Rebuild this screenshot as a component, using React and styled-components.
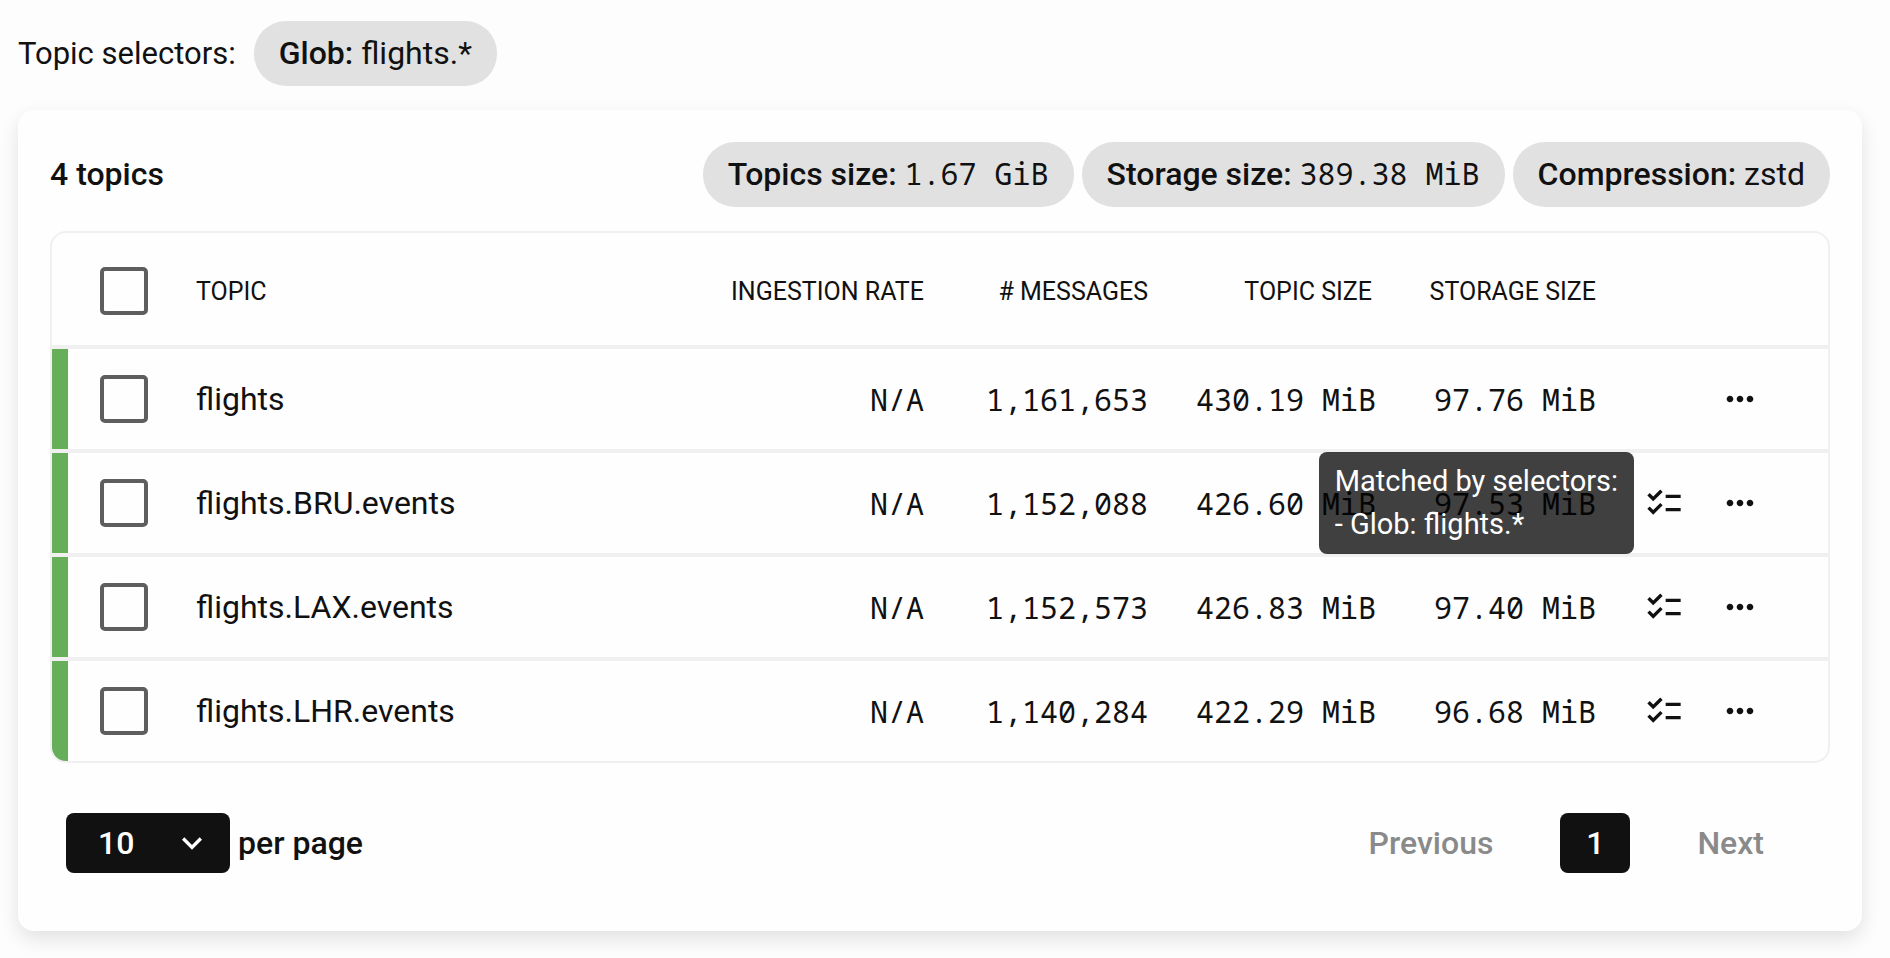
import React, {useState} from 'react';
import styled, { createGlobalStyle } from 'styled-components';
import { MdChecklist, MdExpandMore, MdMoreHoriz } from 'react-icons/md';

const topics = [
  { name: 'flights', rate: 'N/A', messages: '1,161,653', size: '430.19 MiB', storage: '97.76 MiB', matched: false },
  { name: 'flights.BRU.events', rate: 'N/A', messages: '1,152,088', size: '426.60 MiB', storage: '97.53 MiB', matched: true },
  { name: 'flights.LAX.events', rate: 'N/A', messages: '1,152,573', size: '426.83 MiB', storage: '97.40 MiB', matched: true },
  { name: 'flights.LHR.events', rate: 'N/A', messages: '1,140,284', size: '422.29 MiB', storage: '96.68 MiB', matched: true },
];

const TopicRow = ({ topic, checked, onToggle, showTooltip, onHover }) => (
  <tr>
    <SelectCell>
      <CheckBox type="checkbox" aria-label={`Select ${topic.name}`} checked={checked} onChange={onToggle} />
    </SelectCell>
    <Cell>{topic.name}</Cell>
    <NumCell>{topic.rate}</NumCell>
    <NumCell>{topic.messages}</NumCell>
    <NumCell>{topic.size}</NumCell>
    <NumCell>{topic.storage}</NumCell>
    <Cell>
      <Actions>
        {topic.matched &&
          <Matched onMouseEnter={() => onHover(topic.name)}>
            <MdChecklist size={40} />
            {showTooltip &&
              <Tooltip role="tooltip">
                Matched by selectors:<br />
                - Glob: flights.*
              </Tooltip>}
          </Matched>}
        <MenuBtn type="button" aria-label={`Actions for ${topic.name}`}><MdMoreHoriz size={40} /></MenuBtn>
      </Actions>
    </Cell>
  </tr>
);

export default function App() {
  const [selected, setSelected] = useState([]);
  const [hovered, setHovered] = useState('flights.BRU.events');
  const [perPage, setPerPage] = useState('10');

  const allSelected = selected.length === topics.length;

  const toggle = (name) => {
    setSelected(selected.includes(name) ? selected.filter(n => n !== name) : [...selected, name]);
  };

  return (
    <>
      <GlobalStyle />
      <Page>
        <Selectors>
          <SelectorsLabel>Topic selectors:</SelectorsLabel>
          <Chip><Strong>Glob:</Strong> flights.*</Chip>
        </Selectors>

        <Card>
          <CardHeader>
            <Title>{topics.length} topics</Title>
            <Chips>
              <Chip><Strong>Topics size:</Strong> <Mono>1.67 GiB</Mono></Chip>
              <Chip><Strong>Storage size:</Strong> <Mono>389.38 MiB</Mono></Chip>
              <Chip><Strong>Compression:</Strong> zstd</Chip>
            </Chips>
          </CardHeader>

          <TableWrap>
            <Table>
              <colgroup>
                <Col $width="120px" />
                <Col />
                <Col $width="264px" />
                <Col $width="224px" />
                <Col $width="224px" />
                <Col $width="224px" />
                <Col $width="208px" />
              </colgroup>
              <thead>
                <tr>
                  <HeadCell $select>
                    <CheckBox
                      type="checkbox"
                      aria-label="Select all topics"
                      checked={allSelected}
                      onChange={() => setSelected(allSelected ? [] : topics.map(t => t.name))}
                    />
                  </HeadCell>
                  <HeadCell>Topic</HeadCell>
                  <HeadCell $right>Ingestion rate</HeadCell>
                  <HeadCell $right># Messages</HeadCell>
                  <HeadCell $right>Topic size</HeadCell>
                  <HeadCell $right>Storage size</HeadCell>
                  <HeadCell aria-label="Actions" />
                </tr>
              </thead>
              <tbody>
                {topics.map(topic => (
                  <TopicRow
                    key={topic.name}
                    topic={topic}
                    checked={selected.includes(topic.name)}
                    onToggle={() => toggle(topic.name)}
                    showTooltip={hovered === topic.name}
                    onHover={setHovered}
                  />
                ))}
              </tbody>
            </Table>
          </TableWrap>

          <Footer>
            <PerPage>
              <SelectWrap>
                <Select id="per-page" value={perPage} onChange={(e) => setPerPage(e.target.value)}>
                  <option>10</option>
                  <option>25</option>
                  <option>50</option>
                </Select>
                <SelectArrow size={40} />
              </SelectWrap>
              <label htmlFor="per-page">per page</label>
            </PerPage>
            <Pager aria-label="Pages">
              <PageBtn type="button" disabled>Previous</PageBtn>
              <PageBtn type="button" $active aria-current="page">1</PageBtn>
              <PageBtn type="button" disabled>Next</PageBtn>
            </Pager>
          </Footer>
        </Card>
      </Page>
    </>
  );
}

const GlobalStyle = createGlobalStyle`
  * {
    box-sizing: border-box;
  }
  body {
    margin: 0;
    background-color: #fdfdfd;
    color: #111111;
    font-family: Roboto, sans-serif;
    font-size: 32px;
    line-height: 41px;
  }
`

const Page = styled.main`
  padding: 21px 28px 27px 18px;
`

const Selectors = styled.div`
  display: flex;
  align-items: center;
  gap: 18px;
  margin-bottom: 24px;
`

const SelectorsLabel = styled.span`
  font-size: 31px;
`

const Chip = styled.span`
  display: inline-block;
  padding: 12px 25px;
  border-radius: 32px;
  background-color: #e1e1e1;
  white-space: nowrap;
`

const Strong = styled.strong`
  font-weight: 500;
`

const Mono = styled.span`
  font-family: "Noto Sans Mono", "DejaVu Sans Mono", monospace;
  font-size: 30px;
  line-height: 1;
`

const Card = styled.section`
  padding: 32px 32px 58px;
  border-radius: 16px;
  background-color: #fefefe;
  box-shadow: 0 8px 20px rgba(0, 0, 0, .11);
`

const CardHeader = styled.header`
  display: flex;
  justify-content: space-between;
  align-items: center;
  margin-bottom: 24px;
`

const Title = styled.h2`
  margin: 0;
  font-size: 32px;
  font-weight: 500;
`

const Chips = styled.div`
  display: flex;
  gap: 8px;
`

const TableWrap = styled.div`
  border: 2px solid #f0f0f0;
  border-radius: 16px;
  overflow: hidden;
`

const Table = styled.table`
  width: 100%;
  table-layout: fixed;
  border-collapse: separate;
  border-spacing: 0;
`

const Col = styled.col`
  width: ${props => props.$width || 'auto'};
`

const HeadCell = styled.th`
  height: 112px;
  padding: 4px 24px 0;
  padding-left: ${props => props.$select ? '48px' : '24px'};
  font-size: 25px;
  font-weight: 400;
  text-align: ${props => props.$right ? 'right' : 'left'};
  text-transform: uppercase;
  white-space: nowrap;
`

const Cell = styled.td`
  height: 104px;
  padding: 0 24px;
  border-top: 4px solid #f0f0f0;
  white-space: nowrap;
`

/* green status rail on the left edge */
const SelectCell = styled(Cell)`
  padding-left: 48px;
  box-shadow: inset 16px 0 #67ae5b;
`

const NumCell = styled(Cell)`
  font-family: "Noto Sans Mono", "DejaVu Sans Mono", monospace;
  font-size: 30px;
  text-align: right;
`

const CheckBox = styled.input`
  appearance: none;
  display: block;
  width: 48px;
  height: 48px;
  margin: 0;
  border: 4px solid #5e5e5e;
  border-radius: 5px;
  cursor: pointer;

  &:checked {
    background-color: #5e5e5e;
  }
`

const Actions = styled.div`
  display: flex;
  justify-content: flex-end;
  align-items: center;
  gap: 24px;
  padding-right: 32px;
`

const Matched = styled.span`
  position: relative;
  display: flex;
`

const Tooltip = styled.span`
  position: absolute;
  right: calc(100% + 10px);
  top: 50%;
  transform: translateY(-50%);
  padding: 8px 16px;
  border-radius: 8px;
  background-color: rgba(0, 0, 0, .75);
  color: #ffffff;
  font-size: 29px;
  line-height: 43px;
`

const MenuBtn = styled.button`
  display: flex;
  padding: 12px;
  border: none;
  background-color: transparent;
  color: inherit;
  cursor: pointer;
`

const Footer = styled.footer`
  display: flex;
  justify-content: space-between;
  align-items: center;
  margin-top: 50px;
  padding: 0 18px 0 16px;
  font-weight: 500;
`

const PerPage = styled.div`
  display: flex;
  align-items: center;
  gap: 8px;
`

const SelectWrap = styled.div`
  position: relative;
`

const Select = styled.select`
  appearance: none;
  display: block;
  width: 164px;
  height: 60px;
  padding: 0 32px;
  border: none;
  border-radius: 8px;
  background-color: #111111;
  color: #ffffff;
  font: inherit;
  cursor: pointer;
`

const SelectArrow = styled(MdExpandMore)`
  position: absolute;
  top: 10px;
  right: 18px;
  color: #ffffff;
  pointer-events: none;
`

const Pager = styled.nav`
  display: flex;
  gap: 19px;
`

const PageBtn = styled.button`
  min-width: 70px;
  height: 60px;
  padding: ${props => props.$active ? '0 24px' : '0 48px'};
  border: none;
  border-radius: 8px;
  background-color: ${props => props.$active ? '#111111' : 'transparent'};
  color: ${props => props.$active ? '#ffffff' : '#8a8a8a'};
  font: inherit;
`
